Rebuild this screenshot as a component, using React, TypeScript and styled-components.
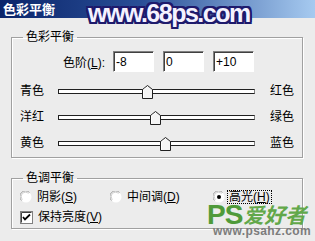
import * as React from 'react';
import styled, {createGlobalStyle} from 'styled-components';

const GlobalStyle = createGlobalStyle`
  html, body {
    margin: 0;
    padding: 0;
    background: #ececec;
  }
  body {
    font-family: "Liberation Sans", "Noto Sans CJK SC", sans-serif;
    font-size: 12px;
    color: #000;
  }
`;

const Window = styled.div`
  position: relative;
  width: 315px;
  height: 241px;
  overflow: hidden;
  background: #ececec;
`;

const TitleBar = styled.div`
  height: 18px;
  background: linear-gradient(90deg, #0a246a 0%, #2a4f97 45%, #a6caf0 100%);
  color: #fff;
  font-weight: bold;
  font-size: 13px;
  line-height: 18px;
  padding-left: 3px;
  font-family: "Noto Sans CJK SC", sans-serif;
`;

const SiteMark = styled.div`
  position: absolute;
  left: 88px;
  top: 1px;
  font-family: "Liberation Sans", sans-serif;
  font-weight: bold;
  font-size: 25px;
  line-height: 24px;
  letter-spacing: -1.5px;
  color: #f4f2ff;
  text-shadow: 2px 0 0 #1e1a6c, -2px 0 0 #1e1a6c, 0 2px 0 #1e1a6c, 0 -2px 0 #1e1a6c,
    2px 2px 0 #1e1a6c, -2px -2px 0 #1e1a6c, 2px -2px 0 #1e1a6c, -2px 2px 0 #1e1a6c;
`;

const Body = styled.div`
  padding: 0 12px 0 11px;
`;

const Group = styled.fieldset<{ $top: number; $pt: number; $pb: number }>`
  margin: ${p => p.$top}px 0 0;
  padding: ${p => p.$pt}px 0 ${p => p.$pb}px;
  border: 1px solid #a0a0a0;
  box-shadow: inset 1px 1px 0 #fff, 1px 1px 0 #fff;
  min-width: 0;
`;

const Legend = styled.legend`
  margin-left: 11px;
  padding: 0 3px;
  line-height: 14px;
  font-size: 12px;
`;

const LevelsRow = styled.div`
  display: flex;
  align-items: center;
  height: 21px;
`;

const LevelsLabel = styled.span`
  width: 93px;
  margin-right: 8px;
  text-align: right;
`;

const LevelInputs = styled.div`
  display: flex;
  gap: 9px;
`;

const LevelInput = styled.input`
  box-sizing: border-box;
  width: 41px;
  height: 21px;
  margin: 0;
  padding: 0 2px;
  border-style: solid;
  border-width: 1px;
  border-color: #808080 #fff #fff #808080;
  box-shadow: inset 1px 1px 0 #404040;
  background: #fff;
  font-family: "Liberation Sans", sans-serif;
  font-size: 12px;
  color: #000;
`;

const Sliders = styled.div`
  margin-top: 6px;
`;

const SliderRow = styled.div`
  display: grid;
  grid-template-columns: 38px 197px 1fr;
  align-items: center;
  height: 26px;
  padding-left: 8px;
`;

const SideLabel = styled.span<{ $right?: boolean }>`
  padding-left: ${p => (p.$right ? 15 : 0)}px;
  line-height: 14px;
`;

const Track = styled.div`
  position: relative;
  box-sizing: border-box;
  height: 5px;
  border: 1px solid #202020;
  border-right-color: #808080;
  background: #fff;
`;

const Thumb = styled.svg`
  position: absolute;
  top: -5px;
  width: 11px;
  height: 14px;
`;

const OptionRow = styled.div`
  display: grid;
  grid-template-columns: 90px 103px auto;
  align-items: center;
  height: 14px;
  padding-left: 8px;
`;

const CheckRow = styled.div`
  display: flex;
  align-items: center;
  height: 14px;
  margin-top: 6px;
  padding-left: 8px;
`;

const Option = styled.label`
  display: flex;
  align-items: center;
  line-height: 12px;
`;

const OptionText = styled.span<{ $focus?: boolean }>`
  margin-left: ${p => (p.$focus ? 2 : 3)}px;
  padding: 0 1px;
  border: 1px dotted ${p => (p.$focus ? '#000' : 'transparent')};
  line-height: 12px;
`;

const Key = styled.span`
  text-decoration: underline;
`;

const BrandMark = styled.div`
  position: absolute;
  left: 207px;
  top: 204px;
  display: flex;
  flex-direction: column;
`;

const BrandTop = styled.div`
  display: flex;
  align-items: center;
  height: 21px;
`;

const BrandPs = styled.span`
  font-family: "Liberation Sans", sans-serif;
  font-weight: bold;
  font-size: 28px;
  line-height: 21px;
  letter-spacing: -1px;
  color: #4f9a3a;
  text-shadow: 0 0 1px #d8f0c8;
`;

const BrandCn = styled.span`
  font-family: "Noto Sans CJK SC", sans-serif;
  font-weight: bold;
  font-style: italic;
  font-size: 21px;
  line-height: 21px;
  color: #62a84a;
  margin-left: 1px;
`;

const BrandUrl = styled.span`
  margin-left: 6px;
  font-family: "Liberation Sans", sans-serif;
  font-weight: bold;
  font-size: 12px;
  line-height: 12px;
  letter-spacing: 0.4px;
  color: #7c7c7c;
`;

const Radio: React.FC<{ checked?: boolean }> = ({checked}) => (
    <svg width="12" height="12" viewBox="0 0 12 12">
        <circle cx="6" cy="6" r="5.5" fill="#fff"/>
        <path d="M1.5 9.5 A5 5 0 0 1 9.5 1.5" fill="none" stroke="#a0a0a0" strokeWidth="1"/>
        <path d="M2.5 8.5 A4 4 0 0 1 8.5 2.5" fill="none" stroke="#d0d0d0" strokeWidth="1"/>
        {checked && <circle cx="6" cy="6" r="2" fill="#000"/>}
    </svg>
);

const CheckBox: React.FC = () => (
    <svg width="13" height="13" viewBox="0 0 13 13">
        <rect x="0.5" y="0.5" width="12" height="12" fill="#fff" stroke="#808080"/>
        <path d="M1.5 11.5 V1.5 H11.5" fill="none" stroke="#404040"/>
        <path d="M3 6 L5 8.5 L10 3.5" fill="none" stroke="#000" strokeWidth="1.8"/>
    </svg>
);

const sliders = [
    {left: '青色', right: '红色', value: -8},
    {left: '洋红', right: '绿色', value: 0},
    {left: '黄色', right: '蓝色', value: 10},
];

export default function App() {
    return (
        <>
            <GlobalStyle/>
            <Window>
                <TitleBar>色彩平衡</TitleBar>
                <SiteMark>www.68ps.com</SiteMark>
                <Body>
                    <Group $top={12} $pt={7} $pb={1}>
                        <Legend>色彩平衡</Legend>
                        <LevelsRow>
                            <LevelsLabel>色阶(<Key>L</Key>):</LevelsLabel>
                            <LevelInputs>
                                <LevelInput defaultValue="-8"/>
                                <LevelInput defaultValue="0"/>
                                <LevelInput defaultValue="+10"/>
                            </LevelInputs>
                        </LevelsRow>
                        <Sliders>
                            {sliders.map(s => (
                                <SliderRow key={s.left}>
                                    <SideLabel>{s.left}</SideLabel>
                                    <Track>
                                        <Thumb viewBox="0 0 11 14"
                                               style={{left: `calc(${(s.value + 100) / 2}% - 6.5px)`}}>
                                            <path d="M0.5 13.5 V4.5 L5.5 0.5 L10.5 4.5 V13.5 Z" fill="#f4f4f4"
                                                  stroke="#202020"/>
                                            <path d="M1.5 12.5 V5 L5.5 1.8" fill="none" stroke="#fff"/>
                                        </Thumb>
                                    </Track>
                                    <SideLabel $right>{s.right}</SideLabel>
                                </SliderRow>
                            ))}
                        </Sliders>
                    </Group>
                    <Group $top={13} $pt={5} $pb={4}>
                        <Legend>色调平衡</Legend>
                        <OptionRow>
                            <Option><Radio/><OptionText>阴影(<Key>S</Key>)</OptionText></Option>
                            <Option><Radio/><OptionText>中间调(<Key>D</Key>)</OptionText></Option>
                            <Option><Radio checked/><OptionText $focus>高光(<Key>H</Key>)</OptionText></Option>
                        </OptionRow>
                        <CheckRow>
                            <Option><CheckBox/><OptionText>保持亮度(<Key>V</Key>)</OptionText></Option>
                        </CheckRow>
                    </Group>
                </Body>
                <BrandMark>
                    <BrandTop>
                        <BrandPs>PS</BrandPs>
                        <BrandCn>爱好者</BrandCn>
                    </BrandTop>
                    <BrandUrl>www.psahz.com</BrandUrl>
                </BrandMark>
            </Window>
        </>
    );
}
